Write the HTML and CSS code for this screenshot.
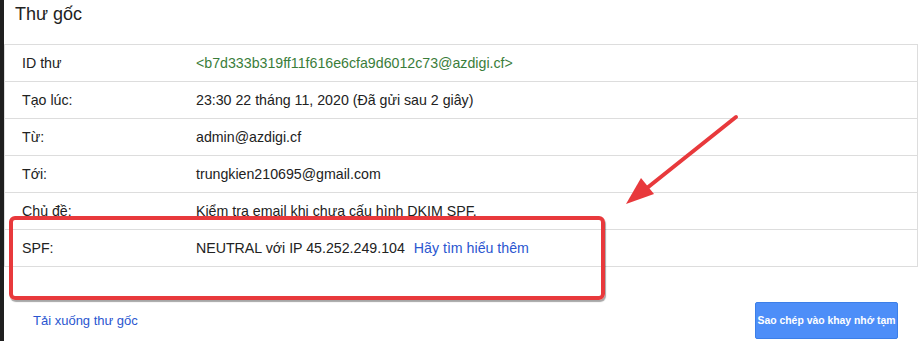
FILE: index.html
```html
<!DOCTYPE html>
<html lang="vi">
<head>
<meta charset="utf-8">
<link rel="stylesheet" href="styles.css">
</head>
<body>
<div class="frame">
  <div class="edge"></div>
  <main class="page">
    <h1 class="title">Thư gốc</h1>
    <div class="table">
      <div class="row"><div class="label">ID thư</div><div class="value id">&lt;b7d333b319ff11f616e6cfa9d6012c73@azdigi.cf&gt;</div></div>
      <div class="row"><div class="label">Tạo lúc:</div><div class="value">23:30 22 tháng 11, 2020 (Đã gửi sau 2 giây)</div></div>
      <div class="row"><div class="label">Từ:</div><div class="value">admin@azdigi.cf</div></div>
      <div class="row"><div class="label">Tới:</div><div class="value">trungkien210695@gmail.com</div></div>
      <div class="row"><div class="label">Chủ đề:</div><div class="value">Kiểm tra email khi chưa cấu hình DKIM SPF.</div></div>
      <div class="row"><div class="label">SPF:</div><div class="value">NEUTRAL với IP 45.252.249.104 <a class="link more" href="#">Hãy tìm hiểu thêm</a></div></div>
    </div>
    <div class="footer">
      <a class="link download" href="#">Tải xuống thư gốc</a>
      <button class="copy">Sao chép vào khay nhớ tạm</button>
    </div>
    <div class="highlight"></div>
    <svg class="arrow" width="130" height="100" viewBox="0 0 130 100">
      <line x1="116" y1="3" x2="22" y2="78" stroke="#e8393c" stroke-width="4" stroke-linecap="round"/>
      <polygon points="6,90 21,64 34,80" fill="#e8393c"/>
    </svg>
  </main>
</div>
</body>
</html>
```

FILE: styles.css
```css
html, body {
  margin: 0;
  padding: 0;
  background: #fff;
}
body {
  font-family: "Liberation Sans", Arial, sans-serif;
  color: #222;
  font-size: 13px;
}
.frame {
  display: flex;
  width: 919px;
  height: 341px;
  overflow: hidden;
}
.edge {
  width: 4px;
  flex: none;
  background: #1f1f1f;
}
.page {
  position: relative;
  flex: 1;
  padding-right: 1px;
}
.title {
  margin: 0;
  height: 44px;
  padding-left: 11px;
  font-size: 18px;
  font-weight: normal;
  line-height: 29px;
  color: #222;
}
.table {
  border: 1px solid #ddd;
  border-bottom: 0;
  width: 912px;
  font-size: 14.2px;
}
.row {
  display: flex;
  align-items: center;
  height: 36px;
  border-bottom: 1px solid #ddd;
}
.label {
  width: 174px;
  padding-left: 17px;
  flex: none;
}
.value {
  white-space: nowrap;
}
.id {
  color: #3a7d3a;
}
.link {
  color: #2a56d0;
  text-decoration: none;
}
.more {
  margin-left: 5px;
}
.footer {
  display: flex;
  justify-content: space-between;
  align-items: center;
  padding: 36px 20px 0 29px;
  margin-top: -1px;
}
.download {
  font-size: 13px;
}
.copy {
  background: #4d8ef8;
  border: 1px solid #3c7fe8;
  border-radius: 2px;
  color: #fff;
  font-family: "Liberation Sans", Arial, sans-serif;
  font-weight: bold;
  font-size: 10.4px;
  white-space: nowrap;
  height: 37px;
  width: 143px;
  padding: 0;
}
.highlight {
  position: absolute;
  left: 5px;
  top: 216px;
  width: 588px;
  height: 76px;
  border: 4px solid #e8393c;
  border-radius: 6px;
  box-shadow: 1px 2px 1px rgba(0,0,0,0.35);
}
.arrow {
  position: absolute;
  left: 616px;
  top: 114px;
}
```
